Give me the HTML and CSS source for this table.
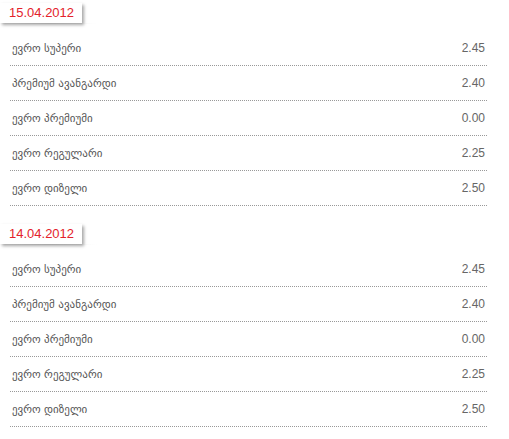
FILE: index.html
```html
<!DOCTYPE html>
<html lang="en">
<head>
    <meta charset="UTF-8">
    <title>Fuel prices</title>
    <link rel="stylesheet" href="styles.css">
</head>
<body>
    <div class="prices">
        <div class="day">
            <div class="day-head">
                <span class="date">15.04.2012</span>
            </div>
            <ul class="list">
                <li class="row"><span class="name">ევრო სუპერი</span><span class="price">2.45</span></li>
                <li class="row"><span class="name">პრემიუმ ავანგარდი</span><span class="price">2.40</span></li>
                <li class="row"><span class="name">ევრო პრემიუმი</span><span class="price">0.00</span></li>
                <li class="row"><span class="name">ევრო რეგულარი</span><span class="price">2.25</span></li>
                <li class="row"><span class="name">ევრო დიზელი</span><span class="price">2.50</span></li>
            </ul>
        </div>

        <div class="day">
            <div class="day-head">
                <span class="date">14.04.2012</span>
            </div>
            <ul class="list">
                <li class="row"><span class="name">ევრო სუპერი</span><span class="price">2.45</span></li>
                <li class="row"><span class="name">პრემიუმ ავანგარდი</span><span class="price">2.40</span></li>
                <li class="row"><span class="name">ევრო პრემიუმი</span><span class="price">0.00</span></li>
                <li class="row"><span class="name">ევრო რეგულარი</span><span class="price">2.25</span></li>
                <li class="row"><span class="name">ევრო დიზელი</span><span class="price">2.50</span></li>
            </ul>
        </div>
    </div>
</body>
</html>
```

FILE: styles.css
```css
* {
    margin: 0;
    padding: 0;
    box-sizing: border-box;
}

body {
    font-family: 'Liberation Sans', 'DejaVu Sans', Arial, sans-serif;
    background: #fff;
    color: #555;
}

.prices {
    width: 487px;
    padding-top: 3px;
}

.day {
    margin-bottom: 18px;
}

.day-head {
    width: 97px;
    height: 21px;
    background: linear-gradient(to right, #fff, #eee 50%, #fff) no-repeat bottom / 100% 1px;
}

.date {
    display: inline-block;
    height: 20px;
    line-height: 20px;
    padding: 0 8px 0 9px;
    background: #fff;
    color: #e3222b;
    font-size: 13px;
    box-shadow: 2px 2px 3px rgba(0, 0, 0, 0.35);
}

.list {
    list-style: none;
    margin-top: 7px;
    margin-left: 10px;
}

.row {
    display: flex;
    justify-content: space-between;
    align-items: center;
    height: 35px;
    padding: 0 2px;
    border-bottom: 1px dotted #999;
    font-size: 12px;
}

.name {
    font-family: 'DejaVu Sans', sans-serif;
    font-size: 11px;
    color: #555;
}

.price {
    color: #666;
}
```
